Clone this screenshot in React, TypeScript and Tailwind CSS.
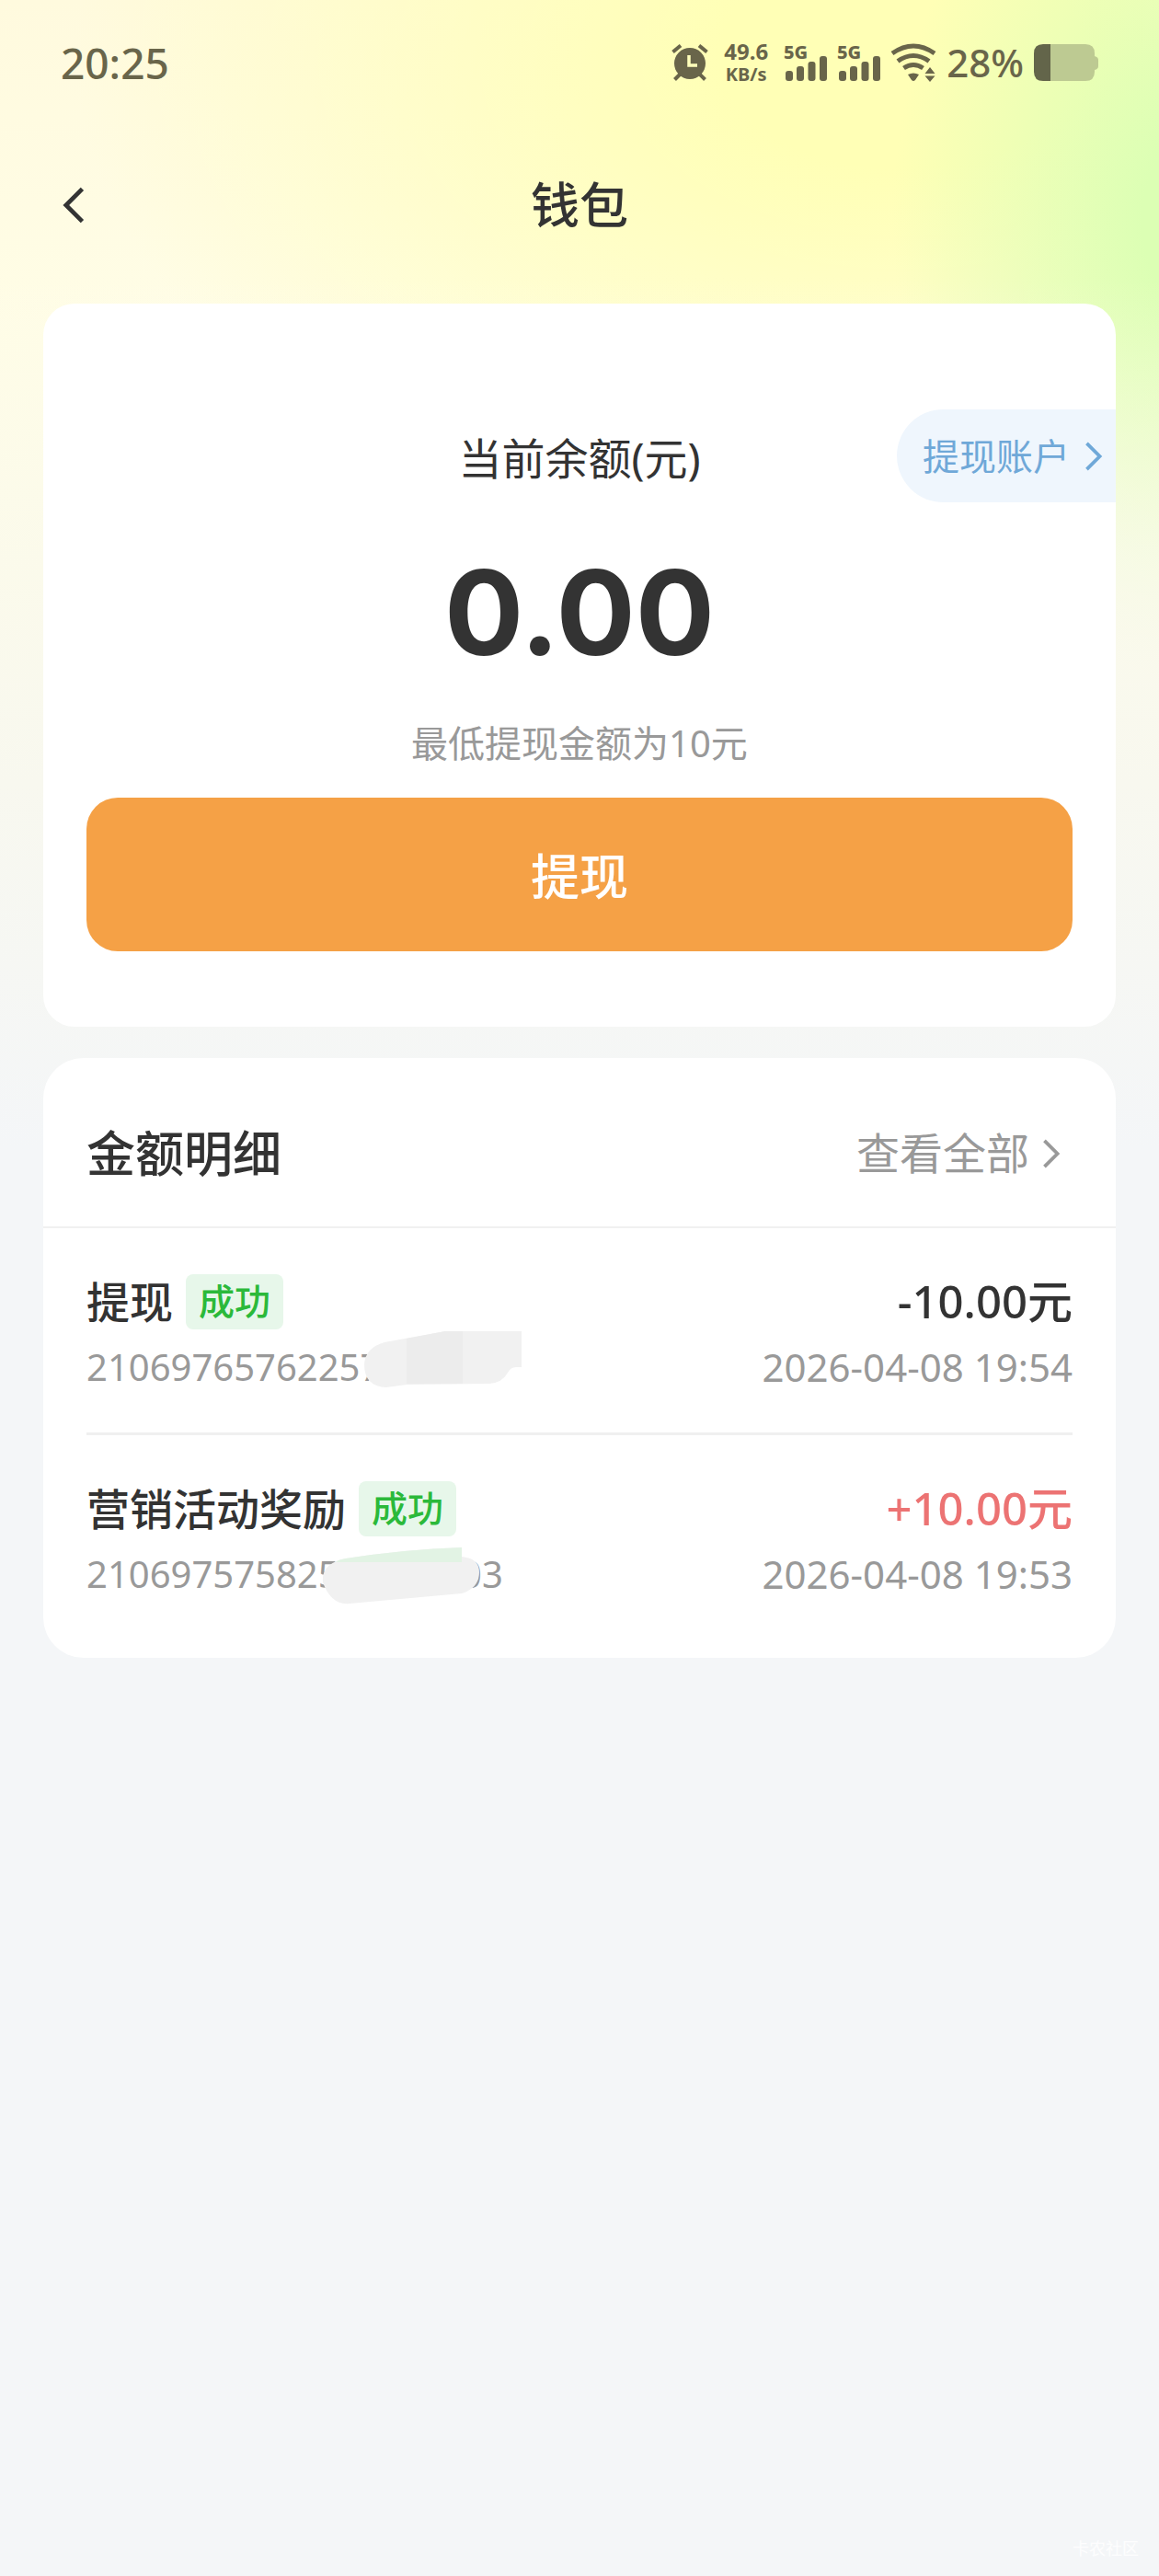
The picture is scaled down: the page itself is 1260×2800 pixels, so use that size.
import { ReactNode } from "react";

type Entry = {
  title: string;
  status: string;
  amount: string;
  income: boolean;
  time: string;
  serial: ReactNode;
};

const entries: Entry[] = [
  {
    title: "提现",
    status: "成功",
    amount: "-10.00元",
    income: false,
    time: "2026-04-08 19:54",
    serial: (
      <>
        21069765762257
        <svg
          className="absolute -top-3 left-[302px]"
          width="172"
          height="64"
          viewBox="0 0 172 64"
          aria-hidden="true"
        >
          <path
            d="M22 13 L88 1 H171 V40 H165 Q159 40 156 46 Q150 57 136 58 L46 59 L24 62 Q0 61 0 37 Q1 19 22 13Z"
            fill="#f1f1f1"
          />
          <path d="M46 9 L88 1 H107 V58 H46Z" fill="#ececec" />
        </svg>
      </>
    ),
  },
  {
    title: "营销活动奖励",
    status: "成功",
    amount: "+10.00元",
    income: true,
    time: "2026-04-08 19:53",
    serial: (
      <>
        <span className="w-[407px]">210697575825</span>
        <span>03</span>
        <svg
          className="absolute -top-px left-[256px]"
          width="172"
          height="62"
          viewBox="0 0 172 62"
          aria-hidden="true"
        >
          <path
            d="M26 12 Q90 2 152 0 V10 Q171 12 171 27 Q171 44 152 50 L30 61 Q10 63 1 38 Q-1 17 26 12Z"
            fill="#f1f1f1"
          />
          <path d="M26 12 Q90 2 152 0 V16 H15 Q18 13 26 12Z" fill="#e2f3e4" />
        </svg>
      </>
    ),
  },
];

function AlarmIcon() {
  return (
    <svg width="40" height="40" viewBox="0 0 40 40" aria-hidden="true">
      <g stroke="currentColor" strokeWidth="4" fill="none">
        <path d="M1.5 8.5 L10 1.5" />
        <path d="M30 1.5 L38.5 8.5" />
        <path d="M3.5 38.5 L10 32" />
        <path d="M36.5 38.5 L30 32" />
      </g>
      <circle cx="20" cy="21" r="17" fill="currentColor" />
      <path d="M19 12 V23 H28" stroke="#ffffbb" strokeWidth="3.5" fill="none" />
    </svg>
  );
}

function SignalIcon() {
  return (
    <svg
      className="overflow-visible"
      width="47"
      height="42"
      viewBox="0 0 47 42"
      fill="currentColor"
      role="img"
      aria-label="5G"
    >
      <text x="0" y="17" fontSize="20" fontWeight="800">
        5G
      </text>
      <rect x="2" y="30" width="8" height="11" rx="3" />
      <rect x="14" y="25" width="8" height="16" rx="3" />
      <rect x="26.5" y="20" width="8" height="21" rx="3" />
      <rect x="39" y="14" width="8" height="27" rx="3" />
    </svg>
  );
}

function WifiIcon() {
  return (
    <svg width="50" height="42" viewBox="0 0 50 42" aria-hidden="true">
      <g fill="none" stroke="currentColor" strokeWidth="5">
        <path d="M2 11 Q25 -5 48 11" />
        <path d="M8 19.5 Q25 7.5 42 19.5" />
        <path d="M14.5 27 Q25 20 35.5 27" />
      </g>
      <path
        d="M19 34 Q25 31 31 34 L27 40 Q25 42 23 40Z M43 26 L48.5 33 H37.5Z M43 42 L48.5 35.5 H37.5Z"
        fill="currentColor"
      />
    </svg>
  );
}

function BatteryIcon() {
  return (
    <svg width="70" height="40" viewBox="0 0 70 40" aria-hidden="true">
      <path
        d="M18 0 H56 Q66 0 66 10 V13 Q70 14 70 17 V24 Q70 27 66 28 V30 Q66 40 56 40 H18Z"
        fill="#bdca92"
      />
      <path d="M18 0 V40 H10 Q0 40 0 30 V10 Q0 0 10 0Z" fill="#63654a" />
    </svg>
  );
}

function Chevron({ className }: { className: string }) {
  return (
    <svg
      className={className}
      viewBox="0 0 20 34"
      fill="none"
      stroke="currentColor"
      strokeWidth="4"
      aria-hidden="true"
    >
      <path d="M2 2 L17 17 L2 32" />
    </svg>
  );
}

function StatusBar() {
  return (
    <div className="flex h-[136px] items-center justify-between px-[66px] text-[#69654a]">
      <span className="text-[46px] leading-none font-medium">20:25</span>
      <div className="flex items-center gap-[11px]">
        <AlarmIcon />
        <div className="mx-1.5 flex flex-col items-center font-bold">
          <span className="text-2xl leading-[25px]">49.6</span>
          <span className="text-xl leading-[25px]">KB/s</span>
        </div>
        <SignalIcon />
        <SignalIcon />
        <WifiIcon />
        <span className="text-[42px] leading-none font-medium">28%</span>
        <BatteryIcon />
      </div>
    </div>
  );
}

function BalanceCard() {
  return (
    <section className="relative rounded-[34px] bg-white px-[47px] pt-[132px] pb-[82px] text-center">
      <a
        href="#account"
        className="absolute top-[115px] right-0 flex h-[101px] items-center rounded-l-full bg-[#eff6fd] pr-3.5 pl-7 text-[40px] text-[#6fa8d8]"
      >
        提现账户
        <Chevron className="ml-4 h-8 w-5" />
      </a>
      <h2 className="text-[47px] leading-[72px]">当前余额(元)</h2>
      <p className="mt-14 font-[family-name:Inter] text-[128px] leading-[152px] font-bold [font-optical-sizing:none]">
        0.00
      </p>
      <p className="mt-9 text-[40px] leading-[60px] text-[#999999]">
        最低提现金额为10元
      </p>
      <button
        type="button"
        className="mt-[29px] h-[167px] w-full rounded-[34px] bg-[#f5a146] pt-1 text-[53px] font-medium text-white"
      >
        提现
      </button>
    </section>
  );
}

function EntryRow({ entry }: { entry: Entry }) {
  return (
    <li className="border-b-[3px] border-[#f0f0f0] pt-[50px] pb-[43px] last:border-0 last:pb-[63px]">
      <div className="flex h-[60px] items-center justify-between">
        <div className="flex items-center text-[47px] font-medium">
          {entry.title}
          <span className="ml-3.5 h-[60px] rounded-lg bg-[#e7f7ea] px-3.5 text-[39px] leading-[58px] font-medium text-[#2bb93a]">
            {entry.status}
          </span>
        </div>
        <span
          className={
            entry.income
              ? "text-[49px] font-medium text-[#ec7373]"
              : "text-[49px] font-medium"
          }
        >
          {entry.amount}
        </span>
      </div>
      <div className="mt-[13px] flex justify-between leading-[56px] text-[#999999]">
        <span className="relative flex text-[40px]">{entry.serial}</span>
        <time className="text-[42px]">{entry.time}</time>
      </div>
    </li>
  );
}

export default function App() {
  return (
    <div className="flex min-h-screen flex-col bg-[#f4f6f8] bg-[linear-gradient(to_bottom,transparent_300px,#f8f8ef_850px,#f4f6f8_1250px),radial-gradient(340px_500px_at_104%_240px,#dcffb4_20%,transparent),radial-gradient(900px_560px_at_78%_60px,#ffffb6_22%,transparent),linear-gradient(#fffade,#fffde6_350px)] font-['Noto_Sans','Noto_Sans_CJK_SC',sans-serif] text-[#333333]">
      <StatusBar />
      <header className="grid h-[170px] grid-cols-[1fr_auto_1fr] items-center px-[66px] pt-1">
        <button type="button" aria-label="返回" className="justify-self-start">
          <Chevron className="h-10 w-7 rotate-180" />
        </button>
        <h1 className="text-[53px] font-medium">钱包</h1>
      </header>

      <main className="mt-6 flex flex-col gap-[34px] px-[47px]">
        <BalanceCard />

        <section className="rounded-[44px] bg-white">
          <div className="flex h-[185px] items-center justify-between border-b-2 border-[#f0f0f0] pt-6 pr-[60px] pl-[47px]">
            <h2 className="text-[53px] font-medium">金额明细</h2>
            <a
              href="#all"
              className="flex items-center text-[47px] text-[#999999]"
            >
              查看全部
              <Chevron className="ml-3.5 h-8 w-5" />
            </a>
          </div>
          <ul className="px-[47px]">
            {entries.map((entry) => (
              <EntryRow key={entry.time} entry={entry} />
            ))}
          </ul>
        </section>
      </main>

      <footer className="mt-auto pr-[22px] pb-[18px] text-right text-lg leading-6 text-white/80">
        卡农社区
      </footer>
    </div>
  );
}
